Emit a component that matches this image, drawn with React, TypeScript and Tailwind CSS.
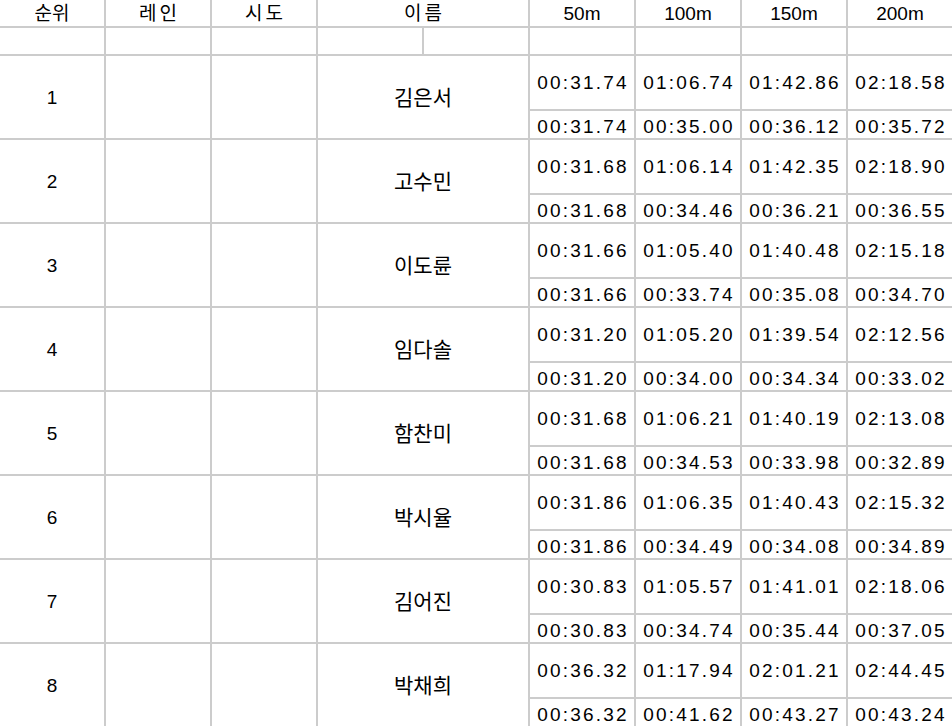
import React from "react";

type Result = {
  rank: number;
  name: string;
  splits: string[];
  laps: string[];
};

const results: Result[] = [
  { rank: 1, name: "김은서", splits: ["00:31.74", "01:06.74", "01:42.86", "02:18.58"], laps: ["00:31.74", "00:35.00", "00:36.12", "00:35.72"] },
  { rank: 2, name: "고수민", splits: ["00:31.68", "01:06.14", "01:42.35", "02:18.90"], laps: ["00:31.68", "00:34.46", "00:36.21", "00:36.55"] },
  { rank: 3, name: "이도륜", splits: ["00:31.66", "01:05.40", "01:40.48", "02:15.18"], laps: ["00:31.66", "00:33.74", "00:35.08", "00:34.70"] },
  { rank: 4, name: "임다솔", splits: ["00:31.20", "01:05.20", "01:39.54", "02:12.56"], laps: ["00:31.20", "00:34.00", "00:34.34", "00:33.02"] },
  { rank: 5, name: "함찬미", splits: ["00:31.68", "01:06.21", "01:40.19", "02:13.08"], laps: ["00:31.68", "00:34.53", "00:33.98", "00:32.89"] },
  { rank: 6, name: "박시율", splits: ["00:31.86", "01:06.35", "01:40.43", "02:15.32"], laps: ["00:31.86", "00:34.49", "00:34.08", "00:34.89"] },
  { rank: 7, name: "김어진", splits: ["00:30.83", "01:05.57", "01:41.01", "02:18.06"], laps: ["00:30.83", "00:34.74", "00:35.44", "00:37.05"] },
  { rank: 8, name: "박채희", splits: ["00:36.32", "01:17.94", "02:01.21", "02:44.45"], laps: ["00:36.32", "00:41.62", "00:43.27", "00:43.24"] },
];

const cell = "border-r-2 border-b-2 border-[#cccccc] p-0 text-center align-middle";
const time = "text-[19px] tracking-[2.2px] pl-[2px]";

export default function App() {
  return (
    <div
      className="h-screen w-[952px] overflow-hidden bg-white text-black"
      style={{ fontFamily: '"Liberation Sans", "Noto Sans CJK KR", sans-serif' }}
    >
      <table className="w-[954px] table-fixed border-separate border-spacing-0 text-[19px] leading-none">
        <colgroup>
          {Array.from({ length: 9 }).map((_, i) => (
            <col key={i} className="w-[106px]" />
          ))}
        </colgroup>
        <thead>
          <tr className="h-[28px]">
            <th className={`${cell} font-normal`}>순위</th>
            <th className={`${cell} font-normal tracking-[3px] pl-[3px]`}>레인</th>
            <th className={`${cell} font-normal tracking-[3px] pl-[3px]`}>시도</th>
            <th colSpan={2} className={`${cell} font-normal tracking-[3px] pl-[3px]`}>
              이름
            </th>
            <th className={`${cell} font-normal`}>50m</th>
            <th className={`${cell} font-normal`}>100m</th>
            <th className={`${cell} font-normal`}>150m</th>
            <th className={`${cell} font-normal`}>200m</th>
          </tr>
          <tr className="h-[28px]">
            {Array.from({ length: 9 }).map((_, i) => (
              <td key={i} className={cell} />
            ))}
          </tr>
        </thead>
        <tbody>
          {results.map((r) => (
            <React.Fragment key={r.rank}>
              <tr className="h-[55px]">
                <td rowSpan={2} className={cell}>
                  {r.rank}
                </td>
                <td rowSpan={2} className={cell} />
                <td rowSpan={2} className={cell} />
                <td rowSpan={2} colSpan={2} className={`${cell} text-[21px]`}>
                  {r.name}
                </td>
                {r.splits.map((s, i) => (
                  <td key={i} className={`${cell} ${time}`}>
                    {s}
                  </td>
                ))}
              </tr>
              <tr className="h-[29px]">
                {r.laps.map((s, i) => (
                  <td key={i} className={`${cell} ${time} pt-[3px]`}>
                    {s}
                  </td>
                ))}
              </tr>
            </React.Fragment>
          ))}
        </tbody>
      </table>
    </div>
  );
}
